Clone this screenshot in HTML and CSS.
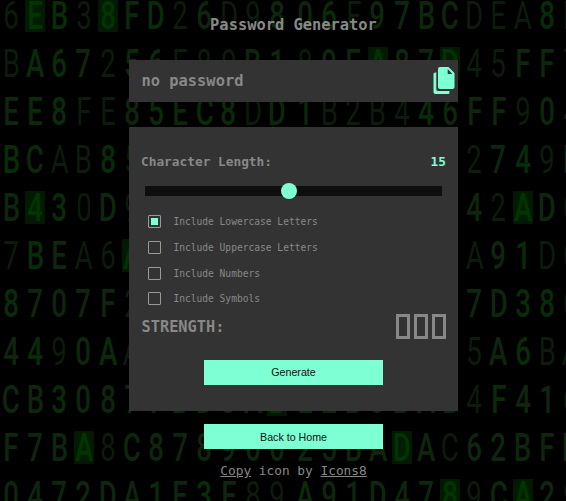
FILE: index.html
```html
<!DOCTYPE html>
<html lang="en">
<head>
<meta charset="utf-8">
<title>Password Generator</title>
<link rel="stylesheet" href="styles.css">
</head>
<body>
<div class="backdrop" id="backdrop" aria-hidden="true"></div>
<main class="app">
  <h1 class="title">Password Generator</h1>
  <section class="output">
    <span>no password</span>
    <button class="copy" aria-label="Copy">
      <svg width="22" height="28" viewBox="0 0 22 28">
        <path d="M2 5.5H3.3V22.3Q3.3 24 5 24H16.5V25.5Q16.5 27 15 27H2.5Q.5 27 .5 25V7Q.5 5.5 2 5.5Z"/>
        <path fill-rule="evenodd" d="M7 0H15.5L21.5 6V20Q21.5 22 19.5 22H7Q5 22 5 20V2Q5 0 7 0ZM14.7 2V7H19.3Z"/>
      </svg>
    </button>
  </section>
  <section class="panel">
    <div class="length"><span>Character Length:</span><span class="value">15</span></div>
    <input class="slider" type="range" min="1" max="30" value="15">
    <div class="options">
      <label class="option"><input type="checkbox" checked><span>Include Lowercase Letters</span></label>
      <label class="option"><input type="checkbox"><span>Include Uppercase Letters</span></label>
      <label class="option"><input type="checkbox"><span>Include Numbers</span></label>
      <label class="option"><input type="checkbox"><span>Include Symbols</span></label>
    </div>
    <div class="strength">
      <span>STRENGTH:</span>
      <div class="bars"><i></i><i></i><i></i></div>
    </div>
    <button class="button">Generate</button>
  </section>
  <button class="button">Back to Home</button>
  <p class="credit"><a href="#">Copy</a> icon by <a href="#">Icons8</a></p>
</main>
<script src="script.js"></script>
</body>
</html>
```
FILE: styles.css
```css
* { box-sizing: border-box; }

body {
  margin: 0;
  height: 501px;
  overflow: hidden;
  background: #000;
  color: #888;
  font-family: "DejaVu Sans Mono", monospace;
}

.backdrop {
  position: absolute;
  inset: 0;
  z-index: -1;
  overflow: hidden;
  font: 500 39.4px/33px Roboto, sans-serif;
}
.code-row {
  display: flex;
  width: 600px;
  height: 48.06px;
}
.cell {
  display: flex;
  justify-content: center;
  flex: none;
  width: 24.18px;
  height: 33px;
  margin-top: -1px;
}
.cell:first-child { margin-left: -1px; }
.cell:nth-child(13) { margin-left: 4px; }
.glyph {
  display: flex;
  justify-content: center;
  width: 20px;
}
.glyph b {
  font-weight: inherit;
  transform: scaleX(.7);
}
.dim { color: #0c1b0c; font-weight: 400; }
.mid { color: #0e260e; }
.lit { color: #082c08; }
.box .glyph { background: radial-gradient(#002000, #041604); color: #003500; }

.app {
  display: flex;
  flex-direction: column;
  align-items: center;
  padding-left: 21px;
}
.title {
  margin: 15px 0 0;
  height: 45px;
  font-size: 15.4px;
  line-height: 20px;
  font-weight: 700;
}
.output {
  display: flex;
  justify-content: space-between;
  align-items: center;
  width: 329px;
  height: 42px;
  padding: 0 3px 0 12.5px;
  background: #333;
  font-size: 15.4px;
  font-weight: 700;
}
.copy {
  display: flex;
  padding: 0;
  border: 0;
  background: none;
}
.copy svg { fill: #7fffd4; }

.panel {
  display: flex;
  flex-direction: column;
  width: 329px;
  height: 284px;
  margin: 25px 0 13px;
  padding: 25px 12px 0;
  background: #333;
}
.length {
  display: flex;
  justify-content: space-between;
  height: 34px;
  font-size: 12.8px;
  line-height: 20px;
  font-weight: 700;
}
.value { color: #7fffd4; }

.slider {
  appearance: none;
  width: 297px;
  height: 10px;
  margin: 0 4px;
  background: #0e0e0e;
}
.slider::-webkit-slider-thumb {
  appearance: none;
  width: 16px;
  height: 16px;
  border-radius: 50%;
  background: #7fffd4;
}

.options { margin: 12.7px 0 1px 7px; }
.option {
  display: flex;
  align-items: center;
  gap: 12.4px;
  height: 25.8px;
  font-size: 9.6px;
}
.option input {
  appearance: none;
  width: 13px;
  height: 13px;
  margin: 0;
  padding: 2px;
  border: 1px solid #999;
  border-radius: 1px;
}
.option input:checked {
  background: #7fffd4 content-box;
}

.strength {
  display: flex;
  justify-content: space-between;
  height: 47.1px;
  padding-left: .5px;
  font-size: 15.3px;
  line-height: 28px;
  font-weight: 700;
}
.bars { display: flex; gap: 4px; margin-top: 1.1px; }
.bars i { width: 14px; height: 25px; border: 3px solid #888; }

.button {
  flex: none;
  align-self: center;
  width: 179px;
  height: 25px;
  padding: 0;
  border: 0;
  background: #7fffd4;
  color: #111;
  font: 10.67px "Liberation Sans", sans-serif;
}
.credit {
  margin: 12px 0 0;
  font-size: 12.8px;
  line-height: 20px;
}
.credit a { color: inherit; }
```
FILE: script.js
```js
// Each row: characters, then intensity (1 dim, 2 mid, 3 lit, x boxed).
const rows = [
  ["6EB38FD26D9806F97BCDEA8B", "1x31x3312112231222211131"],
  ["BA67256E89B189EA87D45FF7", "133213311122122x22x11221"],
  ["EE8FE85EC8DD1B2B446FF904", "233112323312211113222121"],
  ["BCAB85EC8DD13B2B4462749B", "321131111111111111112312"],
  ["B430D97BEA6C41E9D0842AD0", "2x3121111111111111121x21"],
  ["7BEA6A07F2D81BC49E3A91D0", "13211x111111111111112311"],
  ["8707F2D4E60B81AC39F7D380", "322221111111111111122331"],
  ["4490AAB7C2E5D18F63B5A6BA", "231231111111111111112311"],
  ["CB30877BD8ABE2B8BAB4F416", "22322222222x222222213222"],
  ["F7BA8C87890025BADAC62BFD", "222x122222222222x2122222"],
  ["0472DA1E3F89A91D4789CA29", "222222323211322222x12x21"]
];
const names = { 1: "dim", 2: "mid", 3: "lit", x: "box" };
const backdrop = document.getElementById("backdrop");
for (const [chars, levels] of rows) {
  const row = document.createElement("div");
  row.className = "code-row";
  [...chars].forEach((char, i) => {
    const cell = document.createElement("span");
    cell.className = "cell " + names[levels[i]];
    cell.innerHTML = `<span class="glyph"><b>${char}</b></span>`;
    row.append(cell);
  });
  backdrop.append(row);
}
```
